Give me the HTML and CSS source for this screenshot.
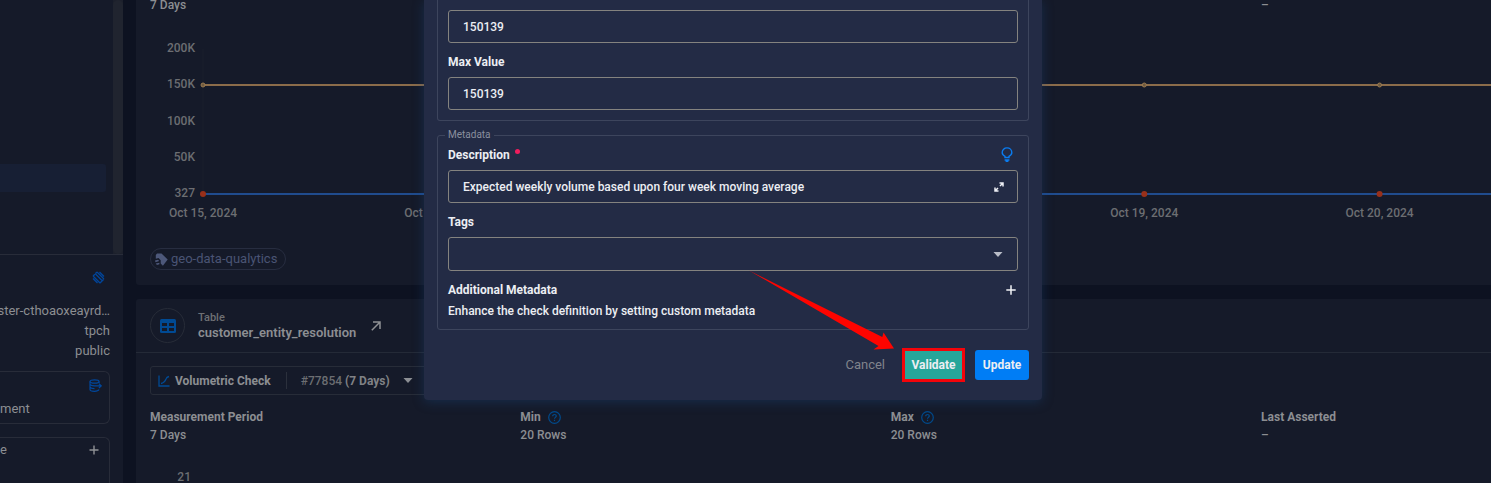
FILE: index.html
```html
<!DOCTYPE html>
<html lang="en">
<head>
<meta charset="utf-8">
<title>Volumetric Check</title>
<link rel="stylesheet" href="styles.css">
</head>
<body>
<div class="app">
  <aside class="sidebar">
    <div class="tree">
      <div class="tree-list"><div class="tree-active"></div></div>
      <div class="scroll-track"><div class="scroll-thumb"></div></div>
    </div>
    <div class="details">
      <svg class="details-icon" width="13" height="13" viewBox="0 0 13 13" fill="none" stroke="#00459b" stroke-width="1.300"><path d="M5 1L12 8M1 5l7 7M3.500 3l7 7M5 1L3.300 2.800M1 5l2-1.800M12 8l-2 2M8 12l2-2M7.500 1l4.500 4.500M1 7.500L5.500 12"/></svg>
      <span>ster-cthoaoxeayrd…</span>
      <span>tpch</span>
      <span>public</span>
    </div>
    <section class="side-card">
      <svg class="side-icon" width="13" height="13" viewBox="0 0 13 13" fill="none" stroke="#00479c" stroke-width="1.200"><ellipse cx="5.500" cy="2.500" rx="4.500" ry="1.700"/><path d="M1 2.500v8c0 1 2 1.800 4.500 1.800s4-.8 4.500-1.800M10 2.500v1.500M1 5.300c.5 1 2.500 1.600 4.500 1.600M1 8c.5 1 2.500 1.600 4.500 1.600M5 6.900h7.200M9.900 4.600l2.300 2.300-2.300 2.300"/></svg>
      <p>ment</p>
    </section>
    <section class="side-card side-card-last">
      <span>e</span>
      <button class="icon-btn" aria-label="Add"><svg width="10" height="10" viewBox="0 0 10 10" stroke="#8f9194" stroke-width="1.400"><path d="M5 .5v9M.5 5h9"/></svg></button>
    </section>
  </aside>

  <main class="main">
    <section class="card">
      <div class="stats">
        <span>7 Days</span>
        <span class="stat-last">–</span>
      </div>
      <div class="chart">
        <div class="y-axis"><span>200K</span><span>150K</span><span>100K</span><span>50K</span><span>327</span></div>
        <svg class="plot" height="181">
          <line class="axis" x1="0" y1="9" x2="0" y2="153"/>
          <line class="line-max" x1="0" y1="45" x2="100%" y2="45"/>
          <line class="line-obs" x1="0" y1="154" x2="100%" y2="154"/>
          <g class="dot-max"><circle cx="0" cy="45" r="2"/><circle cx="18.270%" cy="45" r="2"/><circle cx="36.540%" cy="45" r="2"/><circle cx="54.800%" cy="45" r="2"/><circle cx="73.080%" cy="45" r="2"/><circle cx="91.350%" cy="45" r="2"/></g>
          <g class="dot-obs"><circle cx="0" cy="154" r="3"/><circle cx="18.270%" cy="154" r="3"/><circle cx="36.540%" cy="154" r="3"/><circle cx="54.800%" cy="154" r="3"/><circle cx="73.080%" cy="154" r="3"/><circle cx="91.350%" cy="154" r="3"/></g>
          <g class="tick"><text x="0" y="177">Oct 15, 2024</text><text x="18.270%" y="177">Oct 16, 2024</text><text x="73.080%" y="177">Oct 19, 2024</text><text x="91.350%" y="177">Oct 20, 2024</text></g>
        </svg>
      </div>
      <span class="chip">
        <svg width="13" height="13" viewBox="0 0 13 13" fill="#4d587a"><path d="M2 .5h4.500l6.200 6-4.800 6.200-2.200-2.200V7.200L3.500 5 .8 5.800V2z"/><path d="M0 7.500l3-.8 1.200 1.300-3.700 1.200zM.8 10.500l3.600-.8v1.500l-2.500.8z"/></svg>
        geo-data-qualytics
      </span>
    </section>

    <section class="card card-open">
      <header class="card-head">
        <span class="avatar"><svg width="16" height="14" viewBox="0 0 16 14"><rect x="0" y="0" width="16" height="14" rx="1.500" fill="#004a94"/><path fill="#151a29" d="M2 4h5v3H2zM9 4h5v3H9zM2 9h5v3H2zM9 9h5v3H9z"/></svg></span>
        <div class="entity"><small>Table</small><b>customer_entity_resolution</b></div>
        <a class="open-link" href="#" aria-label="Open table"><svg width="10" height="10" viewBox="0 0 10 10" fill="none" stroke="#8f9194" stroke-width="1.500"><path d="M.8 9.200l8-8M2 1h7v7"/></svg></a>
      </header>
      <div class="card-body">
        <button class="check-select">
          <svg width="12" height="12" viewBox="0 0 12 12" fill="none" stroke="#004a94" stroke-width="1.300"><path d="M1 .5v10.500h10.500M3 8.500c3-.5 4-2 5-4.500.5-1.500 1-2 3-2.500"/></svg>
          <b>Volumetric Check</b>
          <i class="divider"></i>
          <span class="check-id">#77854 <strong>(7 Days)</strong></span>
          <svg width="10" height="5" viewBox="0 0 10 5" fill="#8c8f94"><path d="M.5 0h9L5 5z"/></svg>
        </button>
        <dl class="stats stats-full">
          <div><dt>Measurement Period</dt><dd>7 Days</dd></div>
          <div><dt>Min <svg width="13" height="13" viewBox="0 0 13 13" fill="none" stroke="#004a8c" stroke-width="1.200"><circle cx="6.500" cy="6.500" r="5.800"/><path d="M4.700 5.200c0-1 .7-1.700 1.800-1.700s1.800.7 1.800 1.600c0 1.200-1.800 1.400-1.800 2.600M6.500 8.800v1.200"/></svg></dt><dd>20 Rows</dd></div>
          <div><dt>Max <svg width="13" height="13" viewBox="0 0 13 13" fill="none" stroke="#004a8c" stroke-width="1.200"><circle cx="6.500" cy="6.500" r="5.800"/><path d="M4.700 5.200c0-1 .7-1.700 1.800-1.700s1.800.7 1.800 1.600c0 1.200-1.800 1.400-1.800 2.600M6.500 8.800v1.200"/></svg></dt><dd>20 Rows</dd></div>
          <div><dt>Last Asserted</dt><dd>–</dd></div>
        </dl>
        <div class="chart chart-next"><div class="y-axis"><span>21</span></div></div>
      </div>
    </section>
  </main>

  <div class="overlay">
    <form class="modal">
      <fieldset class="group group-top">
        <div class="field"><input type="text" aria-label="Min Value" value="150139"></div>
        <label class="label" for="max">Max Value</label>
        <div class="field"><input type="text" id="max" value="150139"></div>
      </fieldset>
      <fieldset class="group">
        <legend>Metadata</legend>
        <div class="label label-row">
          <label for="desc">Description <i class="required"></i></label>
          <svg class="bulb" width="12" height="16" viewBox="0 0 12 16" fill="none" stroke="#0a7cf0" stroke-width="1.400"><path d="M4 10.500V9.300C2.200 8.500 1.200 7.300 1.200 5.500 1.200 2.800 3.300.9 6 .9s4.800 1.900 4.800 4.600c0 1.800-1 3-2.800 3.800v1.200z"/><path d="M3.600 13h4.800M4.600 14.400h2.800"/></svg>
        </div>
        <div class="field">
          <input type="text" id="desc" value="Expected weekly volume based upon four week moving average">
          <button type="button" class="icon-btn expand" aria-label="Expand"><svg width="10" height="10" viewBox="0 0 10 10" fill="none" stroke="#eef0f5" stroke-width="1.500"><path d="M5.500 1H9v3.500M9 1L6 4M4.500 9H1V5.500M1 9l3-3"/></svg></button>
        </div>
        <label class="label" for="tags">Tags</label>
        <div class="field field-select">
          <select id="tags"><option></option></select>
          <svg class="caret" width="10" height="5" viewBox="0 0 10 5" fill="#b9bdc8"><path d="M.5 0h9L5 5z"/></svg>
        </div>
        <div class="label label-row">
          <span>Additional Metadata</span>
          <button type="button" class="icon-btn add" aria-label="Add metadata"><svg width="10" height="10" viewBox="0 0 10 10" stroke="#f2f3f6" stroke-width="1.500"><path d="M5 .3v9.400M.3 5h9.400"/></svg></button>
        </div>
        <p class="hint">Enhance the check definition by setting custom metadata</p>
      </fieldset>
      <footer class="actions">
        <button type="button" class="btn btn-text">Cancel</button>
        <button type="button" class="btn btn-validate">Validate</button>
        <button type="submit" class="btn btn-update">Update</button>
        <svg class="arrow" width="146" height="80" viewBox="0 0 146 80"><path fill="#fe0400" d="M0 .5L133.300 67 134.500 62.500 145 78.500 124.500 79.500 129.500 76Z"/></svg>
      </footer>
    </form>
  </div>
</div>
</body>
</html>
```
FILE: styles.css
```css
* { box-sizing: border-box; }
html, body { height: 100%; margin: 0; }
body {
  overflow: hidden;
  background: #0d1221;
  color: #8c8e92;
  font: 500 12px/16px Roboto, "Liberation Sans", sans-serif;
}
p, dl, dd { margin: 0; }
svg { display: block; flex: none; }
button, input, select { font: inherit; color: inherit; }
button { cursor: pointer; }

.app {
  position: relative;
  display: flex;
  gap: 13px;
  min-height: 100%;
}

/* Sidebar */
.sidebar {
  flex: 0 0 123px;
  overflow: hidden;
  background: #151a29;
  font-size: 13px;
  font-weight: 400;
}
.tree {
  display: flex;
  justify-content: space-between;
  height: 255px;
  border-bottom: 1px solid #282c39;
}
.tree-list { flex: 1; margin-right: 7px; padding-top: 164px; }
.tree-active { height: 28px; border-radius: 0 3px 3px 0; background: #171f34; }
.scroll-track { width: 10px; background: #1c202c; }
.scroll-thumb { height: 100%; border-radius: 5px; background: #20242f; }
.details {
  display: flex;
  flex-direction: column;
  align-items: flex-end;
  padding: 16px 13px 10px 0;
  line-height: 20px;
  white-space: nowrap;
}
.details-icon { margin: 0 5px 17px 0; }
.side-card {
  height: 53px;
  margin-right: 13px;
  padding-top: 7px;
  border: 1px solid #282c39;
  border-left: 0;
  border-radius: 0 6px 6px 0;
}
.side-icon { margin: 0 7px 9px auto; }
.side-card-last {
  display: flex;
  justify-content: space-between;
  align-items: flex-start;
  margin-top: 13px;
  padding-top: 4px;
  padding-right: 10px;
  border-bottom: 0;
  border-radius: 0 6px 0 0;
}
.icon-btn {
  display: flex;
  padding: 3px 0;
  border: 0;
  background: none;
}

/* Main column, scrolled part-way down */
.main {
  flex: 1;
  min-width: 0;
  display: flex;
  flex-direction: column;
  gap: 14px;
  margin-top: -3px;
}
.card {
  padding: 0 0 15px 14px;
  border-radius: 3px 0 0 3px;
  background: #151a29;
}
.stats {
  display: grid;
  grid-template-columns: repeat(3, 29fr) 18fr;
}
.stat-last { grid-column: 4; }
.chart {
  display: flex;
  gap: 8px;
  margin-top: 27px;
}
.y-axis {
  display: flex;
  flex-direction: column;
  justify-content: space-between;
  width: 45px;
  height: 161px;
  text-align: right;
  color: #6c6e72;
}
.plot { flex: 1; min-width: 0; overflow: visible; }
.axis { stroke: #1a1f2c; }
.line-max { stroke: #8b6c4a; stroke-width: 2; }
.line-obs { stroke: #204c8e; stroke-width: 2; }
.dot-max { fill: #6f5a3f; stroke: #9a7a50; }
.dot-obs { fill: #98301a; }
.tick { fill: #6c6e72; text-anchor: middle; }
.chip {
  display: inline-flex;
  align-items: center;
  gap: 3px;
  height: 22px;
  margin-top: 27px;
  padding: 0 8px 0 4px;
  border: 1px solid #272d40;
  border-radius: 11px;
  color: #4a5474;
  font-size: 13px;
  font-weight: 400;
  vertical-align: top;
}

.card-open { flex: 1; padding: 0; }
.card-head {
  display: flex;
  align-items: center;
  height: 54px;
  padding-left: 14px;
  border-bottom: 1px solid #242a37;
}
.avatar {
  display: grid;
  place-items: center;
  width: 35px;
  height: 35px;
  margin-right: 13px;
  border: 1px solid #272c38;
  border-radius: 50%;
}
.entity { display: flex; flex-direction: column; }
.entity small { font-size: 11px; line-height: 14px; color: #6e7074; }
.entity b { font-size: 13px; font-weight: 600; }
.open-link { margin-left: 15px; }
.card-body { padding: 13px 0 0 14px; }
.check-select {
  display: flex;
  align-items: center;
  height: 29px;
  padding: 0 24px 0 7px;
  border: 1px solid #272c38;
  border-radius: 3px;
  background: none;
}
.check-select b { margin-left: 5px; font-weight: 700; }
.divider { width: 1px; height: 17px; margin: 0 14px 0 15px; background: #2b303c; }
.check-id { margin-right: 13px; color: #6c6e72; }
.check-id strong { font-weight: 700; color: #808286; }
.stats-full { margin-top: 14px; }
.stats dt {
  display: flex;
  align-items: center;
  gap: 7px;
  margin-bottom: 2px;
  font-weight: 700;
}
.chart-next { margin-top: 26px; }
.chart-next .y-axis { width: 41px; height: 14px; }

/* Dialog */
.overlay {
  position: absolute;
  inset: 0;
  display: flex;
  justify-content: center;
  align-items: flex-start;
  padding-right: 25px;
}
.modal {
  width: 618px;
  max-width: 100%;
  padding: 0 13px;
  border-radius: 0 0 4px 4px;
  background: #232b45;
  box-shadow: 0 2px 12px rgba(26, 72, 128, .4);
  color: #eceef3;
}
.group {
  min-width: 0;
  margin: 0 0 8px;
  padding: 4px 10px 8px;
  border: 1px solid #3d455d;
  border-radius: 3px;
}
.group:nth-of-type(2) { margin-bottom: 0; }
.group-top {
  padding: 10px;
  border-top: 0;
  border-radius: 0 0 3px 3px;
}
legend {
  margin-left: -3px;
  padding: 0 3px;
  font-size: 10px;
  font-weight: 400;
  line-height: 12px;
  color: #8a8f9e;
}
.label {
  display: block;
  margin: 9px 0 5px;
  font-weight: 700;
  line-height: 20px;
}
.label-row { display: flex; justify-content: space-between; align-items: center; }
legend + .label { margin-top: 0; }
.required {
  display: inline-block;
  width: 5px;
  height: 5px;
  margin-left: 2px;
  border-radius: 50%;
  background: #f01d5d;
  vertical-align: 5px;
}
.bulb { margin-right: 5px; }
.field {
  display: flex;
  align-items: center;
  height: 33px;
  border: 1px solid #84837f;
  border-radius: 3px;
}
.field input, .field select {
  flex: 1;
  min-width: 0;
  height: 100%;
  padding: 0 14px;
  border: 0;
  outline: 0;
  background: none;
  appearance: none;
}
.field-select { display: grid; align-items: center; height: 34px; }
.field-select > * { grid-area: 1 / 1; }
.caret { justify-self: end; margin-right: 14px; pointer-events: none; }
.expand { margin-right: 13px; }
.add { margin-right: 2px; }
.label:has(.add) { margin-bottom: 1px; }
.hint { line-height: 20px; }
.actions {
  position: relative;
  display: flex;
  justify-content: flex-end;
  align-items: center;
  gap: 13px;
  padding: 20px 0;
}
.btn {
  height: 30px;
  padding: 0 7px;
  border: 0;
  border-radius: 3px;
  font-weight: 700;
  white-space: nowrap;
}
.btn-text { background: none; color: #80838c; font-size: 13px; font-weight: 400; }
.btn-validate {
  width: 57px;
  height: 28px;
  padding: 0;
  background: #26a69a;
  outline: 3px solid #f4040a;
  border-radius: 0;
}
.btn-update { width: 54px; padding: 0; background: #007df5; }
.arrow {
  position: absolute;
  right: 134px;
  bottom: 50px;
  pointer-events: none;
}
```
